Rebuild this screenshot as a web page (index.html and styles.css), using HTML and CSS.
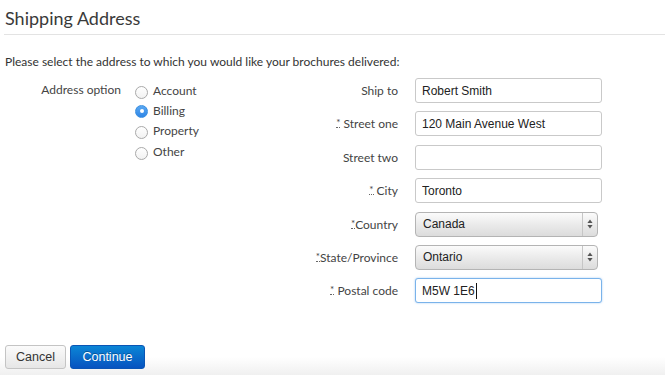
FILE: index.html
```html
<!DOCTYPE html>
<html>
<head>
<meta charset="utf-8">
<link rel="stylesheet" href="styles.css">
</head>
<body>
<div class="page">
  <h1 class="title">Shipping Address</h1>
  <p class="intro">Please select the address to which you would like your brochures delivered:</p>
  <div class="form">
    <div class="left">
      <div class="left-label">Address option</div>
      <div class="radios">
        <div class="radio-row"><span class="radio"></span><span>Account</span></div>
        <div class="radio-row"><span class="radio checked"></span><span>Billing</span></div>
        <div class="radio-row"><span class="radio"></span><span>Property</span></div>
        <div class="radio-row"><span class="radio"></span><span>Other</span></div>
      </div>
    </div>
    <div class="right">
      <label class="lbl">Ship to</label>
      <input class="field" type="text" value="Robert Smith">
      <label class="lbl"><abbr class="req">*</abbr> Street one</label>
      <input class="field" type="text" value="120 Main Avenue West">
      <label class="lbl">Street two</label>
      <input class="field" type="text" value="">
      <label class="lbl"><abbr class="req">*</abbr> City</label>
      <input class="field" type="text" value="Toronto">
      <label class="lbl"><abbr class="req">*</abbr>Country</label>
      <div class="select"><span class="select-text">Canada</span><span class="select-arrow"><svg width="6" height="10" viewBox="0 0 6 10"><path d="M3 0.5 L5.6 4 L0.4 4 Z M3 9.5 L5.6 6 L0.4 6 Z" fill="#555"/></svg></span></div>
      <label class="lbl"><abbr class="req">*</abbr>State/Province</label>
      <div class="select"><span class="select-text">Ontario</span><span class="select-arrow"><svg width="6" height="10" viewBox="0 0 6 10"><path d="M3 0.5 L5.6 4 L0.4 4 Z M3 9.5 L5.6 6 L0.4 6 Z" fill="#555"/></svg></span></div>
      <label class="lbl"><abbr class="req">*</abbr> Postal code</label>
      <div class="field focus">M5W 1E6<span class="caret"></span></div>
    </div>
  </div>
  <div class="footer">
    <button class="btn cancel">Cancel</button>
    <button class="btn primary">Continue</button>
  </div>
</div>
</body>
</html>
```

FILE: styles.css
```css
html, body {
  margin: 0;
  padding: 0;
  background: #fff;
}
body {
  font-family: Lato, "Open Sans", sans-serif;
  color: #333;
  font-size: 12px;
  width: 665px;
  height: 375px;
  overflow: hidden;
}
.page {
  display: flex;
  flex-direction: column;
  height: 375px;
}
.title {
  font-weight: 400;
  font-size: 18px;
  color: #3a3a3a;
  margin: 0 0 0 4px;
  padding: 7px 0 0 1px;
  height: 27px;
  line-height: 22px;
  border-bottom: 1px solid #e3e3e3;
}
.intro {
  margin: 19px 0 0 5px;
  line-height: 16px;
  color: #333;
}
.form {
  display: flex;
  margin-top: 8px;
}
.left {
  display: flex;
  width: 300px;
  padding-top: 2px;
}
.left-label {
  width: 121px;
  text-align: right;
  line-height: 20px;
  padding-right: 14px;
  color: #444;
}
.radios {
  display: flex;
  flex-direction: column;
}
.radio-row {
  display: flex;
  align-items: center;
  height: 20.3px;
  gap: 5px;
  color: #444;
}
.radio {
  box-sizing: border-box;
  width: 13px;
  height: 13px;
  border-radius: 50%;
  border: 1px solid #a9a9a9;
  background: linear-gradient(#fff, #f2f2f2);
  margin-top: 4px;
  display: flex;
  align-items: center;
  justify-content: center;
}
.radio.checked {
  border-color: #3b8fe0;
  background: linear-gradient(#5aa8f2, #2f86e6);
  margin-top: 2px;
}
.radio.checked::after {
  content: "";
  width: 4px;
  height: 4px;
  border-radius: 50%;
  background: #fff;
}
.right {
  display: grid;
  grid-template-columns: 98px 187px;
  column-gap: 17px;
  row-gap: 8.4px;
  grid-auto-rows: 25px;
  align-items: center;
}
.lbl {
  text-align: right;
  color: #444;
  white-space: nowrap;
}
.req {
  text-decoration: none;
  border-bottom: 1px dotted #666;
  font-size: 10px;
  position: relative;
  top: -2px;
  line-height: 10px;
  display: inline-block;
}
.field {
  box-sizing: border-box;
  width: 187px;
  height: 25px;
  border: 1px solid #c9c9c9;
  border-radius: 3px;
  padding: 0 6px;
  font-family: "Liberation Sans", Arial, sans-serif;
  font-size: 12px;
  color: #222;
  background: #fff;
  outline: none;
  margin: 0;
  display: flex;
  align-items: center;
}
.field.focus {
  border-color: #7ab3ea;
  box-shadow: 0 0 2px rgba(90, 160, 235, 0.6);
}
.caret {
  display: inline-block;
  width: 1px;
  height: 16px;
  background: #111;
  margin-left: 1px;
}
.select {
  box-sizing: border-box;
  width: 183px;
  height: 25px;
  border: 1px solid #b4b4b4;
  border-radius: 4px;
  background: linear-gradient(#fbfbfb, #e9e9e9 55%, #dcdcdc);
  display: flex;
  align-items: center;
  font-family: "Liberation Sans", Arial, sans-serif;
  font-size: 12px;
  color: #222;
}
.select-text {
  flex: 1;
  padding-left: 7px;
}
.select-arrow {
  width: 14px;
  height: 23px;
  border-left: 1px solid #c6c6c6;
  display: flex;
  align-items: center;
  justify-content: center;
}
.footer {
  flex: 1;
  margin-top: 42px;
  display: flex;
  align-items: flex-start;
  gap: 4px;
  padding: 0 0 0 5px;
  background: linear-gradient(#fff 40%, #f0f0f0);
}
.btn {
  box-sizing: border-box;
  height: 24px;
  border-radius: 3px;
  font-family: "Liberation Sans", Arial, sans-serif;
  font-size: 12.5px;
  margin: 0;
  padding: 0;
}
.cancel {
  width: 61px;
  border: 1px solid #c4c4c4;
  background: linear-gradient(#fbfbfb, #e6e6e6);
  color: #333;
}
.primary {
  width: 75px;
  border: 1px solid #0a55b5;
  background: linear-gradient(#0b86d6, #0753c0);
  color: #fff;
  text-shadow: 0 -1px 0 rgba(0, 0, 0, 0.3);
}
```
